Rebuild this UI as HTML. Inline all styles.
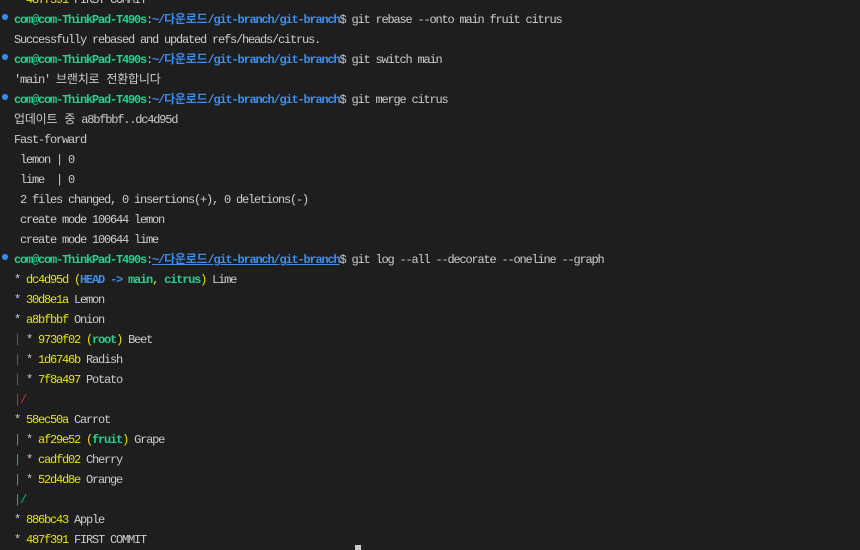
<!DOCTYPE html>
<html><head><meta charset="utf-8"><style>
html,body{margin:0;padding:0;background:#1e1e1e;width:860px;height:550px;overflow:hidden}
.t{position:absolute;left:14px;top:-10px;font-family:"Liberation Mono","Noto Sans CJK KR",monospace;font-size:12px;letter-spacing:-1.2px;color:#cccccc}
.l{height:20px;line-height:20px;position:relative;white-space:pre}
.k{letter-spacing:-0.2px}
.u{color:#23d18b;font-weight:bold}
.p{color:#3b8eea;font-weight:bold}
.y{color:#e5e510}
.g{color:#23d18b;font-weight:bold}
.b{color:#3b8eea;font-weight:bold}
.r{color:#cd3131}
.gr{color:#0dbc79}
.dot{position:absolute;left:-12px;top:4px;width:6px;height:6px;border-radius:50%;background:#3b8eea}
.cur{position:absolute;left:355px;top:545px;width:6px;height:5px;background:#ccc}
</style></head><body>
<div class="t"><div class="l">  <span class="y">487f391</span> FIRST COMMIT</div><div class="l"><span class="dot"></span><span class="u">com@com-ThinkPad-T490s</span>:<span class="p">~/<span class="k">다운로드</span>/git-branch/git-branch</span>$ git rebase --onto main fruit citrus</div><div class="l">Successfully rebased and updated refs/heads/citrus.</div><div class="l"><span class="dot"></span><span class="u">com@com-ThinkPad-T490s</span>:<span class="p">~/<span class="k">다운로드</span>/git-branch/git-branch</span>$ git switch main</div><div class="l">'main' <span class="k">브랜치로 전환합니다</span></div><div class="l"><span class="dot"></span><span class="u">com@com-ThinkPad-T490s</span>:<span class="p">~/<span class="k">다운로드</span>/git-branch/git-branch</span>$ git merge citrus</div><div class="l"><span class="k">업데이트 중</span> a8bfbbf..dc4d95d</div><div class="l">Fast-forward</div><div class="l"> lemon | 0</div><div class="l"> lime  | 0</div><div class="l"> 2 files changed, 0 insertions(+), 0 deletions(-)</div><div class="l"> create mode 100644 lemon</div><div class="l"> create mode 100644 lime</div><div class="l"><span class="dot"></span><span class="u">com@com-ThinkPad-T490s</span>:<span class="p" style="text-decoration:underline">~/<span class="k">다운로드</span>/git-branch/git-branch</span>$ git log --all --decorate --oneline --graph</div><div class="l">* <span class="y">dc4d95d (<span class="b">HEAD -&gt; </span><span class="g">main</span>, <span class="g">citrus</span>)</span> Lime</div><div class="l">* <span class="y">30d8e1a</span> Lemon</div><div class="l">* <span class="y">a8bfbbf</span> Onion</div><div class="l"><span class="r">|</span> * <span class="y">9730f02 (<span class="g">root</span>)</span> Beet</div><div class="l"><span class="r">|</span> * <span class="y">1d6746b</span> Radish</div><div class="l"><span class="r">|</span> * <span class="y">7f8a497</span> Potato</div><div class="l"><span class="r">|/</span></div><div class="l">* <span class="y">58ec50a</span> Carrot</div><div class="l"><span class="gr">|</span> * <span class="y">af29e52 (<span class="g">fruit</span>)</span> Grape</div><div class="l"><span class="gr">|</span> * <span class="y">cadfd02</span> Cherry</div><div class="l"><span class="gr">|</span> * <span class="y">52d4d8e</span> Orange</div><div class="l"><span class="gr">|/</span></div><div class="l">* <span class="y">886bc43</span> Apple</div><div class="l">* <span class="y">487f391</span> FIRST COMMIT</div></div>
<div class="cur"></div>
</body></html>
